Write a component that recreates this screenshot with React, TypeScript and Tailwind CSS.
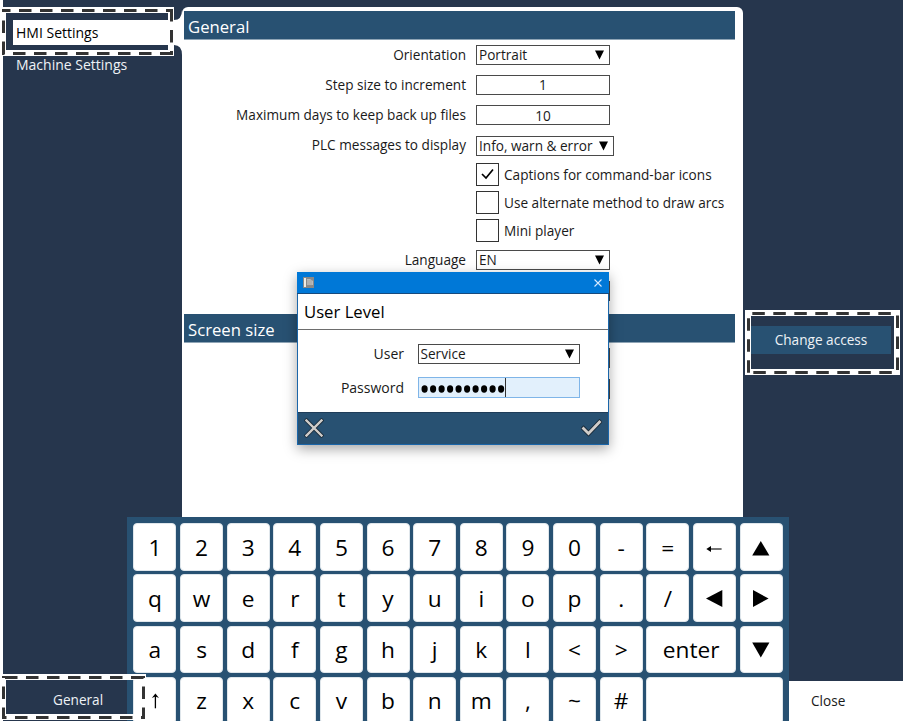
import type { ReactNode } from "react";

function Select({ value, className = "w-[134px]" }: { value: string; className?: string }) {
  return (
    <div className={`flex h-[20px] items-center justify-between border border-[#4a4a4a] bg-white pr-[5px] pl-[2px] ${className}`}>
      <span>{value}</span>
      <svg width="9" height="10" viewBox="0 0 9 10">
        <path d="M0 0.5H9L4.5 9.5Z" fill="#000" />
      </svg>
    </div>
  );
}

function Field({ value }: { value: string }) {
  return <div className="flex h-[20px] w-[134px] items-center justify-center border border-[#4a4a4a] bg-white">{value}</div>;
}

function Row({ label, children }: { label: string; children?: ReactNode }) {
  return (
    <div className="flex h-[20px] items-center">
      <span className="w-[284px] shrink-0 pb-px text-right">{label}</span>
      <div className="ml-[10px]">{children}</div>
    </div>
  );
}

function Check({ label, checked = false }: { label: string; checked?: boolean }) {
  return (
    <div className="ml-[294px] flex h-[23px] items-center">
      <div className="flex size-[23px] items-center justify-center border border-[#333] bg-white">
        {checked && (
          <svg width="13" height="12" viewBox="0 0 13 12">
            <path d="M1 6L5 10L12 1.5" fill="none" stroke="#000" strokeWidth="1.7" />
          </svg>
        )}
      </div>
      <span className="ml-[5px]">{label}</span>
    </div>
  );
}

function SectionTitle({ children }: { children: ReactNode }) {
  return (
    <div className="ml-[2px] flex h-[29px] w-[551px] items-center border-b border-[#8fa5b6] bg-[#285172] pt-[5px] pl-[4px] text-[16.7px] text-white">
      {children}
    </div>
  );
}

/* Triangles and arrows drawn on the cursor keys */
const glyphs: Record<string, ReactNode> = {
  up: <path d="M11.8 5L20.4 19.5H3.2Z" />,
  down: <path d="M11.8 19.5L20.4 4.4H3.2Z" />,
  left: <path d="M4 11.5L20.3 3V20Z" />,
  right: <path d="M19.6 11.5L4 3V20Z" />,
  back: (
    <>
      <path d="M6 13H19.6" fill="none" stroke="#000" strokeWidth="1.1" />
      <path d="M4.3 13L9 10V16Z" />
    </>
  ),
  shift: (
    <>
      <path d="M12.4 19.3V6" fill="none" stroke="#000" strokeWidth="1.3" />
      <path d="M12.4 4.5L16 9L12.4 7.4L8.8 9Z" />
    </>
  ),
};

const keyRows = [
  ["1", "2", "3", "4", "5", "6", "7", "8", "9", "0", "-", "=", "back", "up"],
  ["q", "w", "e", "r", "t", "y", "u", "i", "o", "p", ".", "/", "left", "right"],
  ["a", "s", "d", "f", "g", "h", "j", "k", "l", "<", ">", "enter", "down"],
  ["shift", "z", "x", "c", "v", "b", "n", "m", ",", "~", "#", "space"],
];

function Key({ name }: { name: string }) {
  const span = name === "enter" ? "col-span-2" : name === "space" ? "col-span-3" : "";
  return (
    <div className={`flex items-center justify-center rounded-[4px] border border-[#dfe6eb] bg-white pt-[2px] text-[22.7px] leading-none text-black ${span}`}>
      {glyphs[name] ? (
        <svg width="24" height="24" viewBox="0 0 24 24">{glyphs[name]}</svg>
      ) : name === "space" ? null : (
        name
      )}
    </div>
  );
}

function Keyboard() {
  return (
    <div className="absolute top-[517px] left-[127px] h-[218px] w-[662px] bg-[#285172] px-[6.4px] pt-[6.4px]">
      <div className="grid auto-rows-[47.6px] grid-cols-14 gap-x-[3.6px] gap-y-[3.5px]">
        {keyRows.flat().map((k) => (
          <Key key={k} name={k} />
        ))}
      </div>
    </div>
  );
}

function Dialog() {
  return (
    <div className="absolute top-[272px] left-[297px] flex h-[173px] w-[312px] flex-col border border-[#1b66a9] bg-white text-[14px] shadow-[0_4px_12px_rgba(0,0,0,0.35)]">
      <div className="-mx-px -mt-px flex h-[22px] shrink-0 items-center justify-between border-b border-[#174a7d] bg-[#0078d7] pr-[7px] pl-[6px]">
        <svg width="11" height="11" viewBox="0 0 11 11">
          <path d="M0 0H11V11H0Z" fill="#888" />
          <path d="M1 1H3V10H1Z" fill="#f1ede5" />
          <path d="M4 2H7L10 4V8H4Z" fill="#bbb" />
          <path d="M4 4H9M4 6H9M4 8H9" stroke="#999" strokeWidth="0.6" />
        </svg>
        <svg width="8" height="8" viewBox="0 0 8 8">
          <path d="M0.5 0.5L7.5 7.5M7.5 0.5L0.5 7.5" stroke="#d6eaff" strokeWidth="1.1" />
        </svg>
      </div>
      <div className="flex h-[36px] shrink-0 items-center border-b border-[#6d6d6d] pt-[1px] pl-[6px] text-[16.7px] text-black">User Level</div>
      <div className="flex grow flex-col pt-[14px]">
        <div className="flex h-[20px] items-center">
          <span className="w-[106px] pb-px text-right">User</span>
          <Select value="Service" className="ml-[13.5px] w-[162px] text-[13.62px]" />
        </div>
        <div className="mt-[13px] flex h-[21px] items-center">
          <span className="w-[106px] pt-px text-right">Password</span>
          <div className="ml-[13.5px] flex h-[21px] w-[162px] items-center border border-[#7fb5e8] bg-[#e2f0fc] pl-[2px]">
            <div className="flex pt-[3px]">
              <svg width="85" height="8" viewBox="0 0 85 8">
                {Array.from({ length: 10 }, (_, i) => (
                  <ellipse key={i} cx={3.6 + i * 8.5} cy="4" rx="3.1" ry="3.7" />
                ))}
              </svg>
            </div>
            <div className="-ml-px h-[19px] w-px bg-[#333]" />
          </div>
        </div>
      </div>
      <div className="flex h-[32px] shrink-0 items-center justify-between border-t border-[#1f3d59] bg-[#285172] px-[6px] pb-px">
        <svg width="20" height="20" viewBox="0 0 20 20" fill="none" strokeLinecap="square">
          <path d="M2.5 2.5L17.5 17.5M17.5 2.5L2.5 17.5" stroke="#192a38" strokeWidth="4" />
          <path d="M2.5 2.5L17.5 17.5M17.5 2.5L2.5 17.5" stroke="#d0cdca" strokeWidth="2.4" />
        </svg>
        <svg width="21" height="18" viewBox="0 0 21 18" fill="none" strokeLinecap="square">
          <path d="M2.5 9.5L7.5 14.5L18.5 3" stroke="#192a38" strokeWidth="4.6" />
          <path d="M2.5 9.5L7.5 14.5L18.5 3" stroke="#d0cdca" strokeWidth="2.8" />
        </svg>
      </div>
    </div>
  );
}

interface Frame {
  box: [number, number, number, number];
  /* where a dash begins on the top, right, bottom and left side */
  dashes: [number, number, number, number];
}

const frames: Frame[] = [
  { box: [3.5, 10.5, 171.5, 53.5], dashes: [19, 30, 13, 20.5] },
  { box: [748.5, 313.5, 897.5, 372.5], dashes: [752.3, 315.5, 753.3, 318.3] },
  { box: [3.5, 677.5, 143.5, 717.5], dashes: [5, 686.5, 15, 686.5] },
];

/* Dashed frames: a white band with dark dashes running inside it */
function Callouts() {
  return (
    <svg width="903" height="721" className="pointer-events-none absolute top-0 left-0" fill="none">
      {frames.map(({ box: [x1, y1, x2, y2], dashes: [t, r, b, l] }) => (
        <g key={`${x1}-${y1}`}>
          <rect x={x1 - 0.5} y={y1 - 0.5} width={x2 - x1} height={y2 - y1} stroke="#fff" strokeWidth="6" />
          <g stroke="#333" strokeWidth="3" strokeDasharray="12.5 8.5">
            <path d={`M${x1 - 1.5} ${y1}H${x2 + 1.5}`} strokeDashoffset={x1 - 1.5 - t + 21} />
            <path d={`M${x2} ${y1 - 1.5}V${y2 + 1.5}`} strokeDashoffset={y1 - 1.5 - r + 42} />
            <path d={`M${x1 - 1.5} ${y2}H${x2 + 1.5}`} strokeDashoffset={x1 - 1.5 - b + 21} />
            <path d={`M${x1} ${y1 - 1.5}V${y2 + 1.5}`} strokeDashoffset={y1 - 1.5 - l + 21} />
          </g>
        </g>
      ))}
    </svg>
  );
}

export default function App() {
  return (
    <div className="relative h-[721px] w-[903px] overflow-hidden bg-white pl-[3px] font-['Open_Sans',sans-serif] text-[13.62px] leading-none text-[#1a1a1a]">
      <div className="flex h-[721px] bg-[#26364d]">
        <aside className="flex w-[179px] shrink-0 flex-col text-[14px]">
          <div className="mt-[9px] flex h-[47px] shrink-0 items-center">
            <div className="ml-[10px] flex h-[25px] grow items-center bg-white pt-px pl-[3px] text-black">HMI Settings</div>
            <svg width="14" height="47" viewBox="0 0 14 47">
              <path d="M0 11H6Q14 11 14 1V46Q14 36 6 36H0Z" fill="#fff" />
            </svg>
          </div>
          <span className="mt-[2px] ml-[13px] text-[#eef2f6]">Machine Settings</span>
        </aside>
        <main className="mt-[7px] flex w-[561px] shrink-0 flex-col rounded-t-[6px] bg-white pt-[4px]">
          <SectionTitle>General</SectionTitle>
          <div className="mt-[5px] flex flex-col gap-[10.2px]">
            <Row label="Orientation"><Select value="Portrait" /></Row>
            <Row label="Step size to increment"><Field value="1" /></Row>
            <Row label="Maximum days to keep back up files"><Field value="10" /></Row>
            <Row label="PLC messages to display"><Select value="Info, warn & error" className="w-[138px]" /></Row>
          </div>
          <div className="mt-[7.4px] flex flex-col gap-[5.2px]">
            <Check label="Captions for command-bar icons" checked />
            <Check label="Use alternate method to draw arcs" />
            <Check label="Mini player" />
          </div>
          <div className="mt-[7.6px] flex flex-col gap-[11px]">
            <Row label="Language"><Select value="EN" /></Row>
            <Row label=""><Field value="" /></Row>
          </div>
          <div className="mt-[13px] flex flex-col">
            <SectionTitle>Screen size</SectionTitle>
            <div className="mt-[5px] flex flex-col gap-[11px]">
              <Row label=""><Field value="" /></Row>
              <Row label=""><Field value="" /></Row>
            </div>
          </div>
        </main>
        <aside className="flex grow flex-col">
          <div className="mt-[326px] mr-[12px] ml-[8px] flex h-[28px] items-center justify-center bg-[#285172] text-[#eef2f6]">Change access</div>
          <div className="mt-auto flex h-[40px] items-center bg-white pb-px pl-[68px]">Close</div>
        </aside>
      </div>
      <Keyboard />
      <Dialog />
      <span className="absolute top-[693px] left-[53px] text-[#eef2f6]">General</span>
      <Callouts />
    </div>
  );
}
